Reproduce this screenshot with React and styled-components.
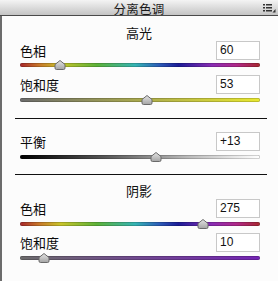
import React from "react";
import styled, { createGlobalStyle } from "styled-components";

const GlobalStyle = createGlobalStyle`
  html, body {
    margin: 0;
    padding: 0;
    background: #fcfcfc;
  }
  body {
    font-family: "Noto Sans CJK SC", "Liberation Sans", sans-serif;
  }
`;

const HUE =
  "linear-gradient(to right, #a8262a 0%, #c8782a 8%, #c8c42a 17%, #5cb238 32%, #34b4b4 48%, #2c5cb8 58%, #1c1c98 66%, #8a2cb4 80%, #b0288a 90%, #a8262e 100%)";

const sections = [
  {
    title: "高光",
    rows: [
      { label: "色相", value: "60", pos: 60 / 360, track: HUE },
      {
        label: "饱和度",
        value: "53",
        pos: 0.53,
        track: "linear-gradient(to right, #6c6c6c, #e8e830)",
      },
    ],
  },
];

const Panel = styled.div`
  width: 278px;
  height: 281px;
  overflow: hidden;
  background: #fcfcfc;
`;

const TitleBar = styled.div`
  position: relative;
  height: 15px;
  border-bottom: 1px solid #4a4a4a;
  background: linear-gradient(to bottom, #f4f4f4, #c4c4c4);
  text-align: center;
`;

const Title = styled.div`
  padding-top: 1px;
  font-size: 12.5px;
  line-height: 15px;
  color: #1a1a1a;
  letter-spacing: 0.3px;
`;

const MenuIcon = styled.svg`
  position: absolute;
  right: 2px;
  top: 3px;
`;

const Body = styled.div`
  height: 265px;
  border-left: 2px solid #6c6c6c;
  padding: 0 18px 0 16px;
  box-sizing: border-box;
`;

const Heading = styled.div`
  padding-top: ${(p) => p.$top}px;
  height: 16px;
  line-height: 16px;
  font-size: 13px;
  text-align: center;
  color: #111;
`;

const Row = styled.div`
  display: flex;
  justify-content: space-between;
  align-items: center;
  height: 19px;
`;

const Label = styled.span`
  font-size: 13px;
  color: #0a0a0a;
  padding-left: 2px;
`;

const ValueBox = styled.div`
  width: 44px;
  height: 19px;
  box-sizing: border-box;
  border: 1px solid #c8c8c8;
  background: #fff;
  font-family: "Liberation Sans", sans-serif;
  font-size: 12px;
  line-height: 17px;
  padding-left: 3px;
  color: #111;
`;

const SliderWrap = styled.div`
  position: relative;
  margin: ${(p) => p.$top}px 0 ${(p) => p.$bottom}px 2px;
  height: 4px;
`;

const Track = styled.div`
  height: 4px;
  border-radius: 2px;
  background: ${(p) => p.$bg};
  box-shadow: inset 0 0 0 0.5px rgba(0, 0, 0, 0.35);
`;

const ThumbIcon = styled.svg`
  position: absolute;
  top: -3px;
  margin-left: -6px;
`;

const Divider = styled.div`
  height: 1px;
  background: #111;
  margin: 0 -7px 0 -3px;
`;

const Spacer = styled.div`
  height: ${(p) => p.$h}px;
`;

function Thumb({ pos }) {
  return (
    <ThumbIcon width="12" height="10" viewBox="0 0 12 10" style={{ left: `${pos * 100}%` }}>
      <defs>
        <linearGradient id="tg" x1="0" y1="0" x2="0" y2="1">
          <stop offset="0" stopColor="#e4e4e4" />
          <stop offset="1" stopColor="#a4a4a4" />
        </linearGradient>
      </defs>
      <path d="M6 0.5 L11 4.5 L11 8 Q11 9.5 9.5 9.5 L2.5 9.5 Q1 9.5 1 8 L1 4.5 Z" fill="url(#tg)" stroke="#6a6a6a" strokeWidth="1" />
    </ThumbIcon>
  );
}

function Slider({ pos, track, top, bottom }) {
  return (
    <SliderWrap $top={top} $bottom={bottom}>
      <Track $bg={track} />
      <Thumb pos={pos} />
    </SliderWrap>
  );
}

function Field({ label, value }) {
  return (
    <Row>
      <Label>{label}</Label>
      <ValueBox>{value}</ValueBox>
    </Row>
  );
}

export default function App() {
  const hi = sections[0];
  return (
    <Panel>
      <GlobalStyle />
      <TitleBar>
        <Title>分离色调</Title>
        <MenuIcon width="13" height="10" viewBox="0 0 13 10">
          <rect x="0" y="1" width="2" height="1.5" fill="#333" />
          <rect x="3" y="1" width="6" height="1.5" fill="#333" />
          <rect x="0" y="4" width="2" height="1.5" fill="#333" />
          <rect x="3" y="4" width="6" height="1.5" fill="#333" />
          <rect x="0" y="7" width="2" height="1.5" fill="#333" />
          <rect x="3" y="7" width="6" height="1.5" fill="#333" />
          <path d="M12.5 6 L12.5 9.5 L9.5 9.5 Z" fill="#333" />
        </MenuIcon>
      </TitleBar>
      <Body>
        <Heading $top={9}>{hi.title}</Heading>
        <Field label={hi.rows[0].label} value={hi.rows[0].value} />
        <Slider pos={hi.rows[0].pos} track={hi.rows[0].track} top={3} bottom={8} />
        <Field label={hi.rows[1].label} value={hi.rows[1].value} />
        <Slider pos={hi.rows[1].pos} track={hi.rows[1].track} top={4} bottom={16} />
        <Divider />
        <Spacer $h={13} />
        <Field label="平衡" value="+13" />
        <Slider
          pos={113 / 200}
          track="linear-gradient(to right, #000 0%, #555 35%, #bbb 70%, #fff 100%)"
          top={4}
          bottom={15}
        />
        <Divider />
        <Heading $top={8}>阴影</Heading>
        <Field label="色相" value="275" />
        <Slider pos={275 / 360} track={HUE} top={4} bottom={7} />
        <Field label="饱和度" value="10" />
        <Slider pos={0.1} track="linear-gradient(to right, #6c6c6c, #7424b4)" top={4} bottom={0} />
      </Body>
    </Panel>
  );
}
